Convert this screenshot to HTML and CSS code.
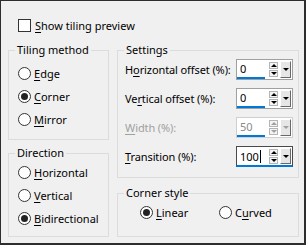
FILE: index.html
```html
<!DOCTYPE html>
<html>
<head>
<meta charset="utf-8">
<link rel="stylesheet" href="styles.css">
</head>
<body>
<div class="dialog">
  <div class="check-row"><span class="checkbox"></span><span><u>S</u>how tiling preview</span></div>
  <div class="columns">
    <div class="col left">
      <fieldset class="group">
        <legend>Tiling method</legend>
        <div class="body tiling">
          <div class="radio"><span class="dot"></span><span><u>E</u>dge</span></div>
          <div class="radio checked"><span class="dot"></span><span><u>C</u>orner</span></div>
          <div class="radio"><span class="dot"></span><span><u>M</u>irror</span></div>
        </div>
      </fieldset>
      <fieldset class="group">
        <legend>Direction</legend>
        <div class="body direction">
          <div class="radio"><span class="dot"></span><span><u>H</u>orizontal</span></div>
          <div class="radio"><span class="dot"></span><span><u>V</u>ertical</span></div>
          <div class="radio checked"><span class="dot"></span><span><u>B</u>idirectional</span></div>
        </div>
      </fieldset>
    </div>
    <div class="col right">
      <fieldset class="group">
        <legend>Settings</legend>
        <div class="body settings">
          <div class="field">
            <span class="label">H<u>o</u>rizontal offset (%):</span>
            <div class="spin"><span class="edit">0</span><span class="arrows"><span class="arr up"></span><span class="arr down"></span></span><span class="drop"></span></div>
          </div>
          <div class="field">
            <span class="label">Ve<u>r</u>tical offset (%):</span>
            <div class="spin"><span class="edit">0</span><span class="arrows"><span class="arr up"></span><span class="arr down"></span></span><span class="drop"></span></div>
          </div>
          <div class="field disabled">
            <span class="label"><u>W</u>idth (%):</span>
            <div class="spin"><span class="edit">50</span><span class="arrows"><span class="arr up"></span><span class="arr down"></span></span><span class="drop"></span></div>
          </div>
          <div class="field">
            <span class="label"><u>T</u>ransition (%):</span>
            <div class="spin focus"><span class="edit">100<span class="caret"></span></span><span class="arrows"><span class="arr up"></span><span class="arr down"></span></span><span class="drop"></span></div>
          </div>
        </div>
      </fieldset>
      <fieldset class="group">
        <legend>Corner style</legend>
        <div class="body corner">
          <div class="radio checked"><span class="dot"></span><span><u>L</u>inear</span></div>
          <div class="radio"><span class="dot"></span><span>C<u>u</u>rved</span></div>
        </div>
      </fieldset>
    </div>
  </div>
</div>
</body>
</html>
```
FILE: styles.css
```css
* { box-sizing: border-box; }
html, body { margin: 0; padding: 0; }
body {
  width: 306px;
  height: 245px;
  overflow: hidden;
  font-family: "Noto Sans", "Open Sans", sans-serif;
  font-size: 11px;
  color: #000;
}
u { text-decoration-thickness: 1px; text-underline-offset: 2px; }
.dialog {
  width: 306px;
  height: 245px;
  background: #f0f0f0;
  border: 1px solid #2d2d2d;
  border-right-width: 2px;
  border-bottom-width: 2px;
  padding: 16px 0 0 7px;
}
.check-row {
  display: flex;
  align-items: center;
  height: 16px;
  padding-left: 10px;
}
.checkbox {
  width: 13px;
  height: 13px;
  border: 1px solid #333;
  background: #fff;
  margin-right: 4px;
}
.columns {
  display: flex;
  gap: 8px;
  margin-top: 9px;
}
.col { display: flex; flex-direction: column; flex: none; }
.left { width: 101px; gap: 5px; }
.right { width: 182px; gap: 7px; }
.group {
  margin: 0;
  padding: 0;
  min-width: 0;
  border: 1px solid #dcdcdc;
}
.group legend {
  padding: 0 2px;
  margin-left: 6px;
  line-height: 16px;
  font-size: 11px;
}
.radio {
  display: flex;
  align-items: center;
  height: 23px;
  white-space: nowrap;
}
.dot {
  width: 13px;
  height: 13px;
  border: 1px solid #333;
  border-radius: 50%;
  background: #fff;
  margin-right: 3px;
  display: flex;
  align-items: center;
  justify-content: center;
  flex: none;
}
.radio.checked .dot::after {
  content: "";
  width: 7px;
  height: 7px;
  border-radius: 50%;
  background: #222;
}
.tiling { padding: 4px 0 8px 9px; }
.direction { padding: 0 0 6px 9px; }
.settings {
  padding: 1px 5px 10px 7px;
  display: flex;
  flex-direction: column;
  gap: 8px;
}
.field {
  display: flex;
  align-items: center;
  height: 21px;
}
.label {
  flex: 1;
  min-width: 0;
  white-space: nowrap;
  letter-spacing: -0.1px;
}
.spin {
  flex: none;
  display: flex;
  width: 57px;
  height: 21px;
  border: 1px solid #a0a0a0;
  background: #fff;
}
.edit {
  width: 28px;
  flex: none;
  padding-left: 3px;
  border-bottom: 2px solid #0078d7;
  line-height: 17px;
  display: flex;
  align-items: center;
}
.arrows {
  display: flex;
  flex-direction: column;
  justify-content: center;
  gap: 1px;
  margin-left: 4px;
  flex: none;
}
.arr {
  width: 9px;
  height: 7px;
  border: 1px solid #b4b4b4;
  background: #f4f4f4;
  display: flex;
  align-items: center;
  justify-content: center;
}
.arr.up::after {
  content: "";
  border-left: 3px solid transparent;
  border-right: 3px solid transparent;
  border-bottom: 3px solid #000;
}
.arr.down::after {
  content: "";
  border-left: 3px solid transparent;
  border-right: 3px solid transparent;
  border-top: 3px solid #000;
}
.drop {
  flex: none;
  width: 11px;
  margin: 1px 0 1px 2px;
  background: #e6e6e6;
  border: 1px solid;
  border-color: #fff #696969 #696969 #fff;
  display: flex;
  align-items: center;
  justify-content: center;
}
.drop::after {
  content: "";
  border-left: 3px solid transparent;
  border-right: 3px solid transparent;
  border-top: 3px solid #000;
}
.disabled .label { color: #a0a0a0; }
.disabled .spin { border-color: #cfcfcf; }
.disabled .edit { color: #8a8a8a; }
.disabled .arr.up::after { border-bottom-color: #a0a0a0; }
.disabled .arr.down::after,
.disabled .drop::after { border-top-color: #a0a0a0; }
.spin.focus {
  border-color: #4a4a4a;
  border-bottom: 2px solid #0078d7;
}
.spin.focus .edit { border-bottom: none; }
.caret {
  width: 1px;
  height: 13px;
  background: #000;
  margin-left: 1px;
}
.corner {
  display: flex;
  padding: 0 0 12px 22px;
}
.corner .radio { width: 82px; }
```
